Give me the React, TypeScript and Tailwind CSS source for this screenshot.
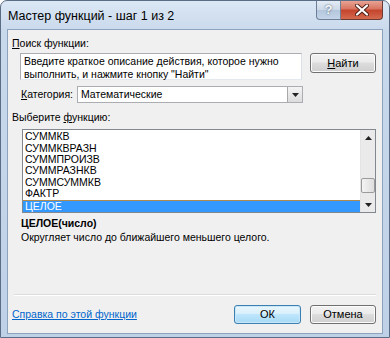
const items = ['СУММКВ', 'СУММКВРАЗН', 'СУММПРОИЗВ', 'СУММРАЗНКВ', 'СУММСУММКВ', 'ФАКТР', 'ЦЕЛОЕ'];

const font = "font-['Liberation_Sans',Arial,sans-serif]";

function WinButton({ label, underline, primary }: { label: string; underline?: boolean; primary?: boolean }) {
  return (
    <div
      className={
        'flex h-full items-center justify-center rounded-[3px] border text-[11px] text-black ' +
        (primary
          ? 'border-[#3c7fb1] bg-[linear-gradient(#eaf6fd_0%,#d9f0fc_45%,#bee6fd_50%,#a7d9f5_100%)] shadow-[inset_0_0_0_1px_#c8e8f9]'
          : 'border-[#707070] bg-[linear-gradient(#f2f2f2_0%,#ebebeb_45%,#dddddd_50%,#cfcfcf_100%)] shadow-[inset_0_0_0_1px_#fcfcfc]')
      }
    >
      {underline ? (
        <span>
          <span className="underline">{label[0]}</span>
          {label.slice(1)}
        </span>
      ) : (
        label
      )}
    </div>
  );
}

function Arrow({ up }: { up?: boolean }) {
  return (
    <svg width="7" height="4" viewBox="0 0 7 4">
      <path d={up ? 'M0 4 L3.5 0 L7 4 Z' : 'M0 0 L7 0 L3.5 4 Z'} fill="#222" />
    </svg>
  );
}

export default function App() {
  return (
    <div className={`${font} w-[390px] h-[338px] bg-white`}>
      <div className="flex h-full w-full flex-col rounded-t-[7px] border border-[#5b6d84] bg-[linear-gradient(#dbe7f4_0px,#c9d9ec_30px,#bfd1e7_100%)]">
        {/* title bar */}
        <div className="flex h-[28px] items-start justify-between">
          <div className="pl-[7px] pt-[6px] text-[12.5px] text-black">Мастер функций - шаг 1 из 2</div>
          <div className="mr-[6px] flex">
            <div className="flex h-[19px] w-[25px] items-center justify-center rounded-bl-[4px] border border-t-0 border-[#6d7f96] bg-[linear-gradient(#e4ecf5_0%,#cbd8e8_50%,#b4c6dc_51%,#c4d5e8_100%)] text-[13px] font-bold text-[#f4f7fb] [text-shadow:0_0_2px_#3b4a5e]">
              ?
            </div>
            <div className="flex h-[19px] w-[42px] items-center justify-center rounded-br-[4px] border border-l-0 border-t-0 border-[#6d3a32] bg-[linear-gradient(#e8a394_0%,#d7735f_45%,#c5432c_50%,#d36a4f_100%)]">
              <svg width="14" height="12" viewBox="0 0 14 12">
                <path d="M2 1.5 L12 10.5 M12 1.5 L2 10.5" stroke="#4a1e16" strokeWidth="4" strokeLinecap="round" />
                <path d="M2 1.5 L12 10.5 M12 1.5 L2 10.5" stroke="#ffffff" strokeWidth="2.2" strokeLinecap="round" />
              </svg>
            </div>
          </div>
        </div>

        {/* client area */}
        <div className="mx-[6px] flex h-[305px] flex-col border border-[#8da2bc] bg-[#f0f0f0] text-[10.5px] text-black">
          <div className="mt-[4px] h-[18px] pl-[4px] leading-[18px]">
            <span className="underline">П</span>оиск функции:
          </div>

          <div className="mt-[1px] flex">
            <div className="ml-[12px] h-[27px] w-[282px] border border-[#abadb3] border-b-[#e3e9ef] border-r-[#dbdfe6] bg-white pl-[3px] pt-[1px] leading-[12.5px]">
              Введите краткое описание действия, которое нужно
              <br />
              выполнить, и нажмите кнопку "Найти"
            </div>
            <div className="ml-[8px] h-[20px] w-[66px]">
              <WinButton label="Найти" underline />
            </div>
          </div>

          <div className="mt-[6px] flex items-center">
            <div className="ml-[13px] w-[56px]">
              <span className="underline">К</span>атегория:
            </div>
            <div className="flex h-[17px] w-[226px] border border-[#abadb3] bg-white">
              <div className="flex-1 pl-[3px] leading-[15px]">Математические</div>
              <div className="flex w-[15px] items-center justify-center border-l border-[#a8a8a8] bg-[linear-gradient(#f4f4f4,#dcdcdc)]">
                <Arrow />
              </div>
            </div>
          </div>

          <div className="mt-[5px] h-[18px] pl-[4px] leading-[18px]">
            Выберите <span className="underline">ф</span>ункцию:
          </div>

          <div className="ml-[14px] mt-[3px] flex h-[84px] w-[354px] border border-[#828790] bg-white">
            <div className="flex min-h-0 flex-1 flex-col pt-[1px]">
              {items.map((it, i) => (
                <div
                  key={it}
                  className={
                    'flex min-h-0 flex-1 items-center overflow-hidden pl-[2px] leading-[11px] ' +
                    (i === items.length - 1 ? 'border-t border-[#b18a50] bg-[#3399ff] text-white' : '')
                  }
                >
                  {it}
                </div>
              ))}
            </div>
            <div className="flex w-[15px] flex-col items-center border-l border-[#e4e4e4] bg-[#eaeaea]">
              <div className="flex h-[15px] items-center">
                <Arrow up />
              </div>
              <div className="flex-1" />
              <div className="h-[15px] w-[14px] rounded-[2px] border border-[#9a9a9a] bg-[linear-gradient(90deg,#f3f3f3,#dedede)]" />
              <div className="h-[4px]" />
              <div className="flex h-[15px] items-center">
                <Arrow />
              </div>
            </div>
          </div>

          <div className="ml-[13px] mt-[4px] h-[13px] font-bold leading-[13px]">ЦЕЛОЕ(число)</div>
          <div className="ml-[13px] mt-[1px] h-[13px] leading-[13px]">Округляет число до ближайшего меньшего целого.</div>

          <div className="mx-[6px] mt-[50px] h-[2px] border-t border-b border-[#dcdcdc] border-b-white" />

          <div className="mt-[9px] flex h-[19px] items-center">
            <div className="pl-[4px] text-[#0066cc] underline">Справка по этой функции</div>
            <div className="flex-1" />
            <div className="h-[19px] w-[67px]">
              <WinButton label="ОК" primary />
            </div>
            <div className="ml-[9px] mr-[6px] h-[19px] w-[66px]">
              <WinButton label="Отмена" />
            </div>
          </div>
        </div>
      </div>
    </div>
  );
}
